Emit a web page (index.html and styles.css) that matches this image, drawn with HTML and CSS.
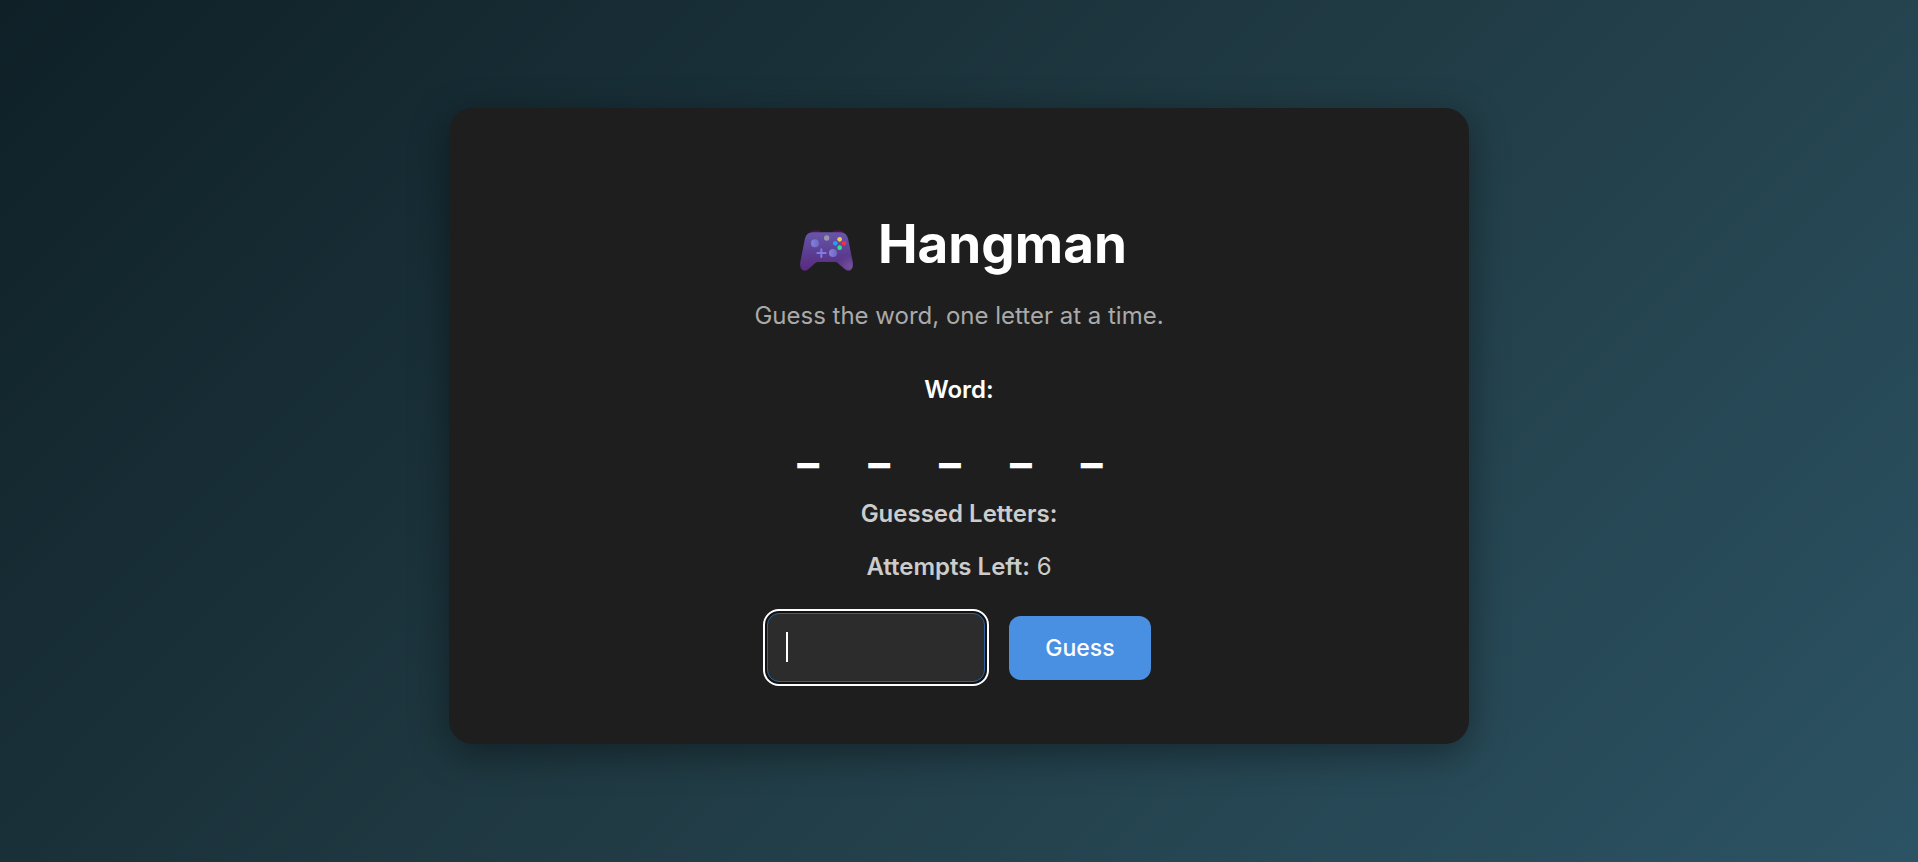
FILE: index.html
```html
<!DOCTYPE html>
<html lang="en">
<head>
<meta charset="utf-8">
<meta name="viewport" content="width=device-width, initial-scale=1">
<title>Hangman</title>
<link rel="stylesheet" href="styles.css">
</head>
<body>
<main class="card">
  <h1 class="title">
    <svg class="title-icon" viewBox="57 86 165 129" aria-hidden="true">
      <defs>
        <linearGradient id="body" x1="0" y1="0" x2="0" y2="1">
          <stop offset="0" stop-color="#6657a8"/>
          <stop offset="0.55" stop-color="#5c3d91"/>
          <stop offset="1" stop-color="#59297f"/>
        </linearGradient>
        <radialGradient id="grip" cx="0.96" cy="0.9" r="0.3">
          <stop offset="0" stop-color="#74539e"/>
          <stop offset="1" stop-color="#74539e" stop-opacity="0"/>
        </radialGradient>
        <linearGradient id="stick" x1="0" y1="0" x2="1" y2="0">
          <stop offset="0" stop-color="#8581dc"/>
          <stop offset="1" stop-color="#6d68c4"/>
        </linearGradient>
      </defs>
      <path d="M88 99q6-9 15-9h13q5 0 6 7zM157 97q2-7 8-7h12q11 0 17 10z" fill="#501447"/>
      <path d="M98 96H181Q199 96 204 114L218 184Q221 203 212 209Q203 214 193 205L174 189Q170 185 164 185H115Q109 185 105 189L86 206Q76 214 67 209Q58 203 61 184L75 114Q80 96 98 96Z" fill="url(#body)"/>
      <path d="M98 96H181Q199 96 204 114L218 184Q221 203 212 209Q203 214 193 205L174 189Q170 185 164 185H115Q109 185 105 189L86 206Q76 214 67 209Q58 203 61 184L75 114Q80 96 98 96Z" fill="url(#grip)"/>
      <circle cx="105" cy="129" r="12" fill="url(#stick)"/>
      <circle cx="159" cy="158" r="12" fill="url(#stick)"/>
      <circle cx="140" cy="113" r="8" fill="#9d96a8"/>
      <path d="M124 147v23M112 158h25" stroke="#817be6" stroke-width="6" stroke-linecap="round"/>
      <circle cx="179" cy="117" r="7" fill="#f4c455"/>
      <circle cx="166" cy="129" r="7" fill="#299cf5"/>
      <circle cx="192" cy="129" r="7" fill="#f7294f"/>
      <circle cx="179" cy="142" r="7" fill="#32e388"/>
    </svg>
    <span>Hangman</span>
  </h1>
  <p class="subtitle">Guess the word, one letter at a time.</p>
  <p class="word-label">Word:</p>
  <div class="word"><span>_</span><span>_</span><span>_</span><span>_</span><span>_</span></div>
  <p class="status"><strong>Guessed Letters:</strong></p>
  <p class="status"><strong>Attempts Left:</strong> 6</p>
  <form class="guess-form">
    <div class="field">
      <input class="guess-input" type="text" maxlength="1" aria-label="Your guess" autocomplete="off">
      <span class="caret"></span>
    </div>
    <button class="guess-button" type="button">Guess</button>
  </form>
</main>
</body>
</html>
```
FILE: styles.css
```css
* {
  box-sizing: border-box;
}

body {
  margin: 0;
  min-height: 100vh;
  display: flex;
  align-items: center;
  justify-content: center;
  padding: 20px 20px 30px;
  background: linear-gradient(135deg, #0f2027, #203a43, #2c5364);
  color: #fff;
  font-family: Inter, "Liberation Sans", sans-serif;
  font-size: 24px;
  line-height: 36px;
}

.card {
  width: 100%;
  max-width: 1020px;
  padding: 102px 60px 62px;
  display: flex;
  flex-direction: column;
  align-items: center;
  border-radius: 24px;
  background: #1e1e1e;
  box-shadow: 0 10px 38px rgba(0, 0, 0, 0.4);
  text-align: center;
}

.title {
  margin: 0 0 20px;
  display: flex;
  align-items: center;
  font-size: 53px;
  font-weight: 700;
  line-height: 68px;
}

.title-icon {
  width: 55px;
  height: 43px;
  margin: 12px 24px 0 8px;
}

.subtitle {
  margin: 0 0 38px;
  color: #aaa;
}

.word-label {
  margin: 0;
  font-weight: 600;
}

.word {
  display: flex;
  gap: 49px;
  margin: 2px 18px 14px 0;
  font-size: 46px;
  font-weight: 700;
  line-height: 72px;
}

.status {
  margin: 0 0 17px;
  color: #ccc;
}

.status strong {
  font-weight: 600;
}

.guess-form {
  margin: 11px 0 0;
  display: flex;
  align-items: center;
  gap: 24px;
}

.field {
  position: relative;
  display: flex;
}

.guess-input {
  width: 218px;
  height: 69px;
  padding: 16px 18px;
  border: 1px solid #2f629f;
  border-radius: 12px;
  outline: 2px solid #fff;
  outline-offset: 2px;
  box-shadow: 0 0 0 2px #101216;
  background: #2c2c2c;
  color: #fff;
  caret-color: transparent;
  font: inherit;
}

.caret {
  position: absolute;
  left: 19px;
  top: 19px;
  width: 2px;
  height: 30px;
  background: #fff;
}

.guess-button {
  height: 64px;
  padding: 0 36px;
  border: 0;
  border-radius: 12px;
  background: #4a90e2;
  color: #fff;
  font: inherit;
  font-size: 23px;
  font-weight: 500;
}
```
